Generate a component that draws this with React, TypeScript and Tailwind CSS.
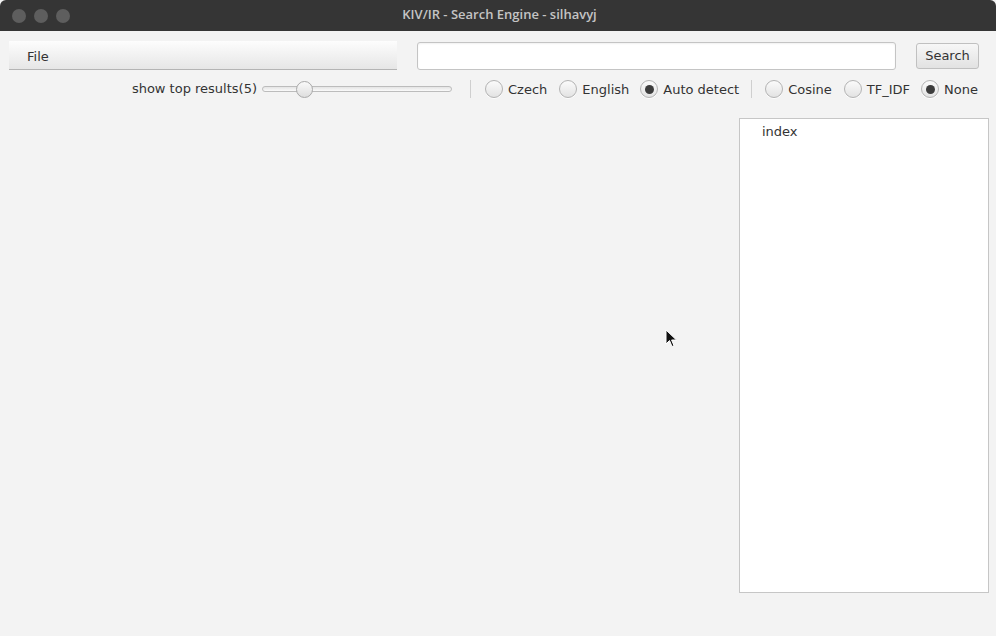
import React from "react";

const font = { fontFamily: '"DejaVu Sans", sans-serif' };

function Radio({ label, checked }: { label: string; checked?: boolean }) {
  return (
    <div className="flex items-center">
      <div className="w-[18px] h-[18px] rounded-full border border-[#b3b3b3] bg-gradient-to-b from-[#fbfbfb] to-[#e3e3e3] flex items-center justify-center shadow-[0_1px_0_rgba(255,255,255,0.8)]">
        {checked && <div className="w-[9px] h-[9px] rounded-full bg-[#3c3c3c]" />}
      </div>
      <span className="ml-[5px] text-[13px] text-[#333333] leading-none">{label}</span>
    </div>
  );
}

export default function App() {
  return (
    <div className="w-[996px] h-[636px] bg-[#f3f3f3] flex flex-col relative overflow-hidden" style={font}>
      {/* Title bar */}
      <div className="h-[31px] bg-[#353535] flex items-center relative rounded-t-[6px]">
        <div className="flex gap-[8px] ml-[12px]">
          <div className="w-[14px] h-[14px] rounded-full bg-[#5e5e5e]" />
          <div className="w-[14px] h-[14px] rounded-full bg-[#5e5e5e]" />
          <div className="w-[14px] h-[14px] rounded-full bg-[#5e5e5e]" />
        </div>
        <div
          className="absolute inset-0 flex items-center justify-center pb-[1px] pl-[3px] text-[13px] font-semibold text-[#c4c4c4]"
          style={{ fontFamily: '"Open Sans", sans-serif' }}
        >
          KIV/IR - Search Engine - silhavyj
        </div>
      </div>

      {/* Row 1 */}
      <div className="flex items-center mt-[10px] pl-[9px] pr-[17px]">
        <div className="w-[388px] shrink-0 h-[29px] bg-gradient-to-b from-[#fdfdfd] to-[#e6e6e6] border-b border-[#b4b4b4] flex items-center pl-[18px] pt-[3px] text-[13px] text-[#333333]">
          File
        </div>
        <div className="ml-[20px] w-[479px] shrink-0 h-[28px] bg-white border border-[#c4c4c4] rounded-[3px] shadow-[inset_0_1px_2px_rgba(0,0,0,0.06)]" />
        <div className="ml-[20px] w-[63px] shrink-0 h-[26px] border border-[#c0c0c0] rounded-[3px] bg-gradient-to-b from-[#f7f7f7] to-[#e2e2e2] flex items-center justify-center pt-[1px] text-[13px] text-[#333333]">
          Search
        </div>
      </div>

      {/* Row 2 */}
      <div className="flex items-center justify-end mt-[9px] h-[20px] pr-[18px]">
        <span className="text-[13px] text-[#333333] mr-[5px]">show top results(5)</span>
        <div className="relative w-[190px] h-[20px] flex items-center">
          <div className="w-full h-[6px] rounded-full border border-[#bcbcbc] bg-gradient-to-b from-[#e4e4e4] to-[#fafafa]" />
          <div className="absolute left-[34px] top-[2px] w-[17px] h-[17px] rounded-full border border-[#a9a9a9] bg-gradient-to-b from-[#fafafa] to-[#dedede]" />
        </div>
        <div className="w-px h-[18px] bg-[#cfcfcf] ml-[18px] mr-[14px]" />
        <div className="flex items-center">
          <Radio label="Czech" />
          <div className="w-[12px]" />
          <Radio label="English" />
          <div className="w-[11px]" />
          <Radio label="Auto detect" checked />
        </div>
        <div className="w-px h-[18px] bg-[#cfcfcf] ml-[12px] mr-[13px]" />
        <div className="flex items-center">
          <Radio label="Cosine" />
          <div className="w-[12px]" />
          <Radio label="TF_IDF" />
          <div className="w-[11px]" />
          <Radio label="None" checked />
        </div>
      </div>

      {/* Content */}
      <div className="flex justify-end mt-[19px] pr-[7px]">
        <div className="w-[250px] h-[475px] bg-white border border-[#c6c6c6] pl-[22px]">
          <span className="text-[13px] text-[#333333]">index</span>
        </div>
      </div>

      {/* Cursor */}
      <svg className="absolute left-[665px] top-[329px]" width="14" height="20" viewBox="0 0 14 20">
        <path d="M1 1 L1 15 L4.5 11.5 L7 17.5 L9 16.7 L6.6 11 L11.5 11 Z" fill="#111" stroke="#fff" strokeWidth="1" strokeLinejoin="round" />
      </svg>
    </div>
  );
}
